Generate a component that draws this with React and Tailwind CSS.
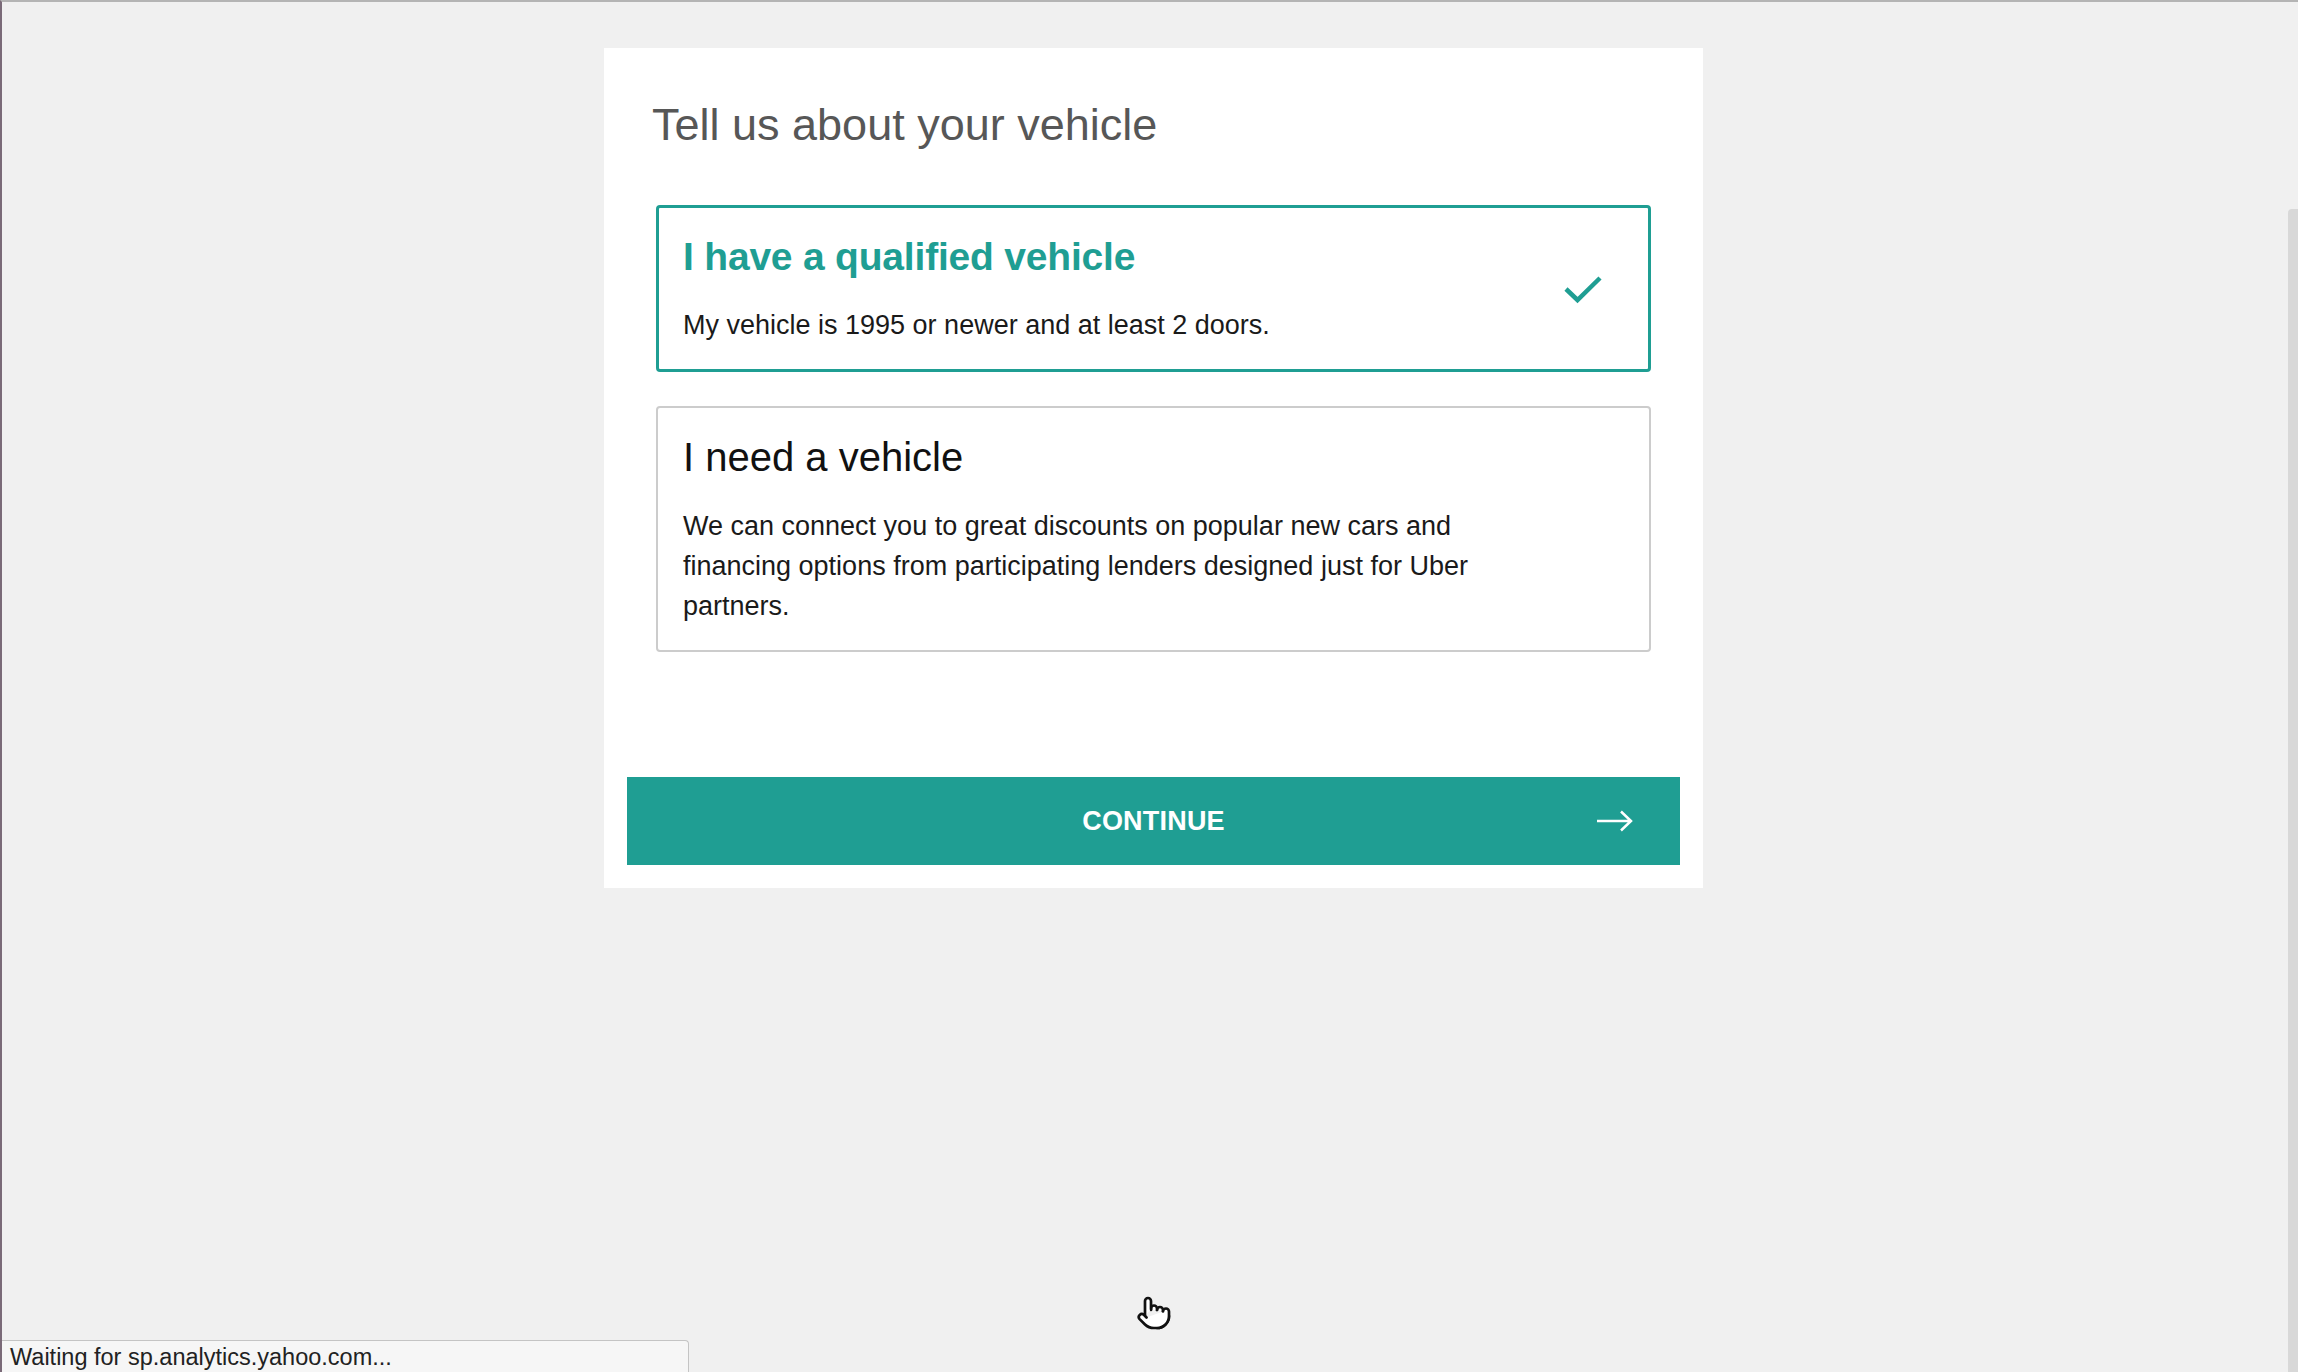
import { Pointer } from "lucide-react";

const font = { fontFamily: '"Liberation Sans", Arial, sans-serif' };

function CheckMark() {
  return (
    <svg width="38" height="28" viewBox="0 0 38 28" fill="none">
      <path d="M2 13 L13.5 24 L36 2" stroke="#1f9e93" strokeWidth="4.5" strokeLinejoin="miter" />
    </svg>
  );
}

function ArrowRight() {
  return (
    <svg width="36" height="22" viewBox="0 0 36 22" fill="none">
      <path d="M0 11 H34 M24 1.5 L34 11 L24 20.5" stroke="#ffffff" strokeWidth="2.5" />
    </svg>
  );
}

export default function App() {
  return (
    <div
      className="relative h-screen overflow-hidden bg-[#f0f0f0] border-t-2 border-t-[#b4b4b4] border-l-2 border-l-[#7a6a78]"
      style={font}
    >
      {/* form card */}
      <div className="ml-[602px] mt-[46px] w-[1099px] bg-white pt-[51px] pb-[23px]">
        <h1 className="pl-[48px] text-[45px] leading-[52px] font-normal text-[#575757]">
          Tell us about your vehicle
        </h1>

        <div className="mx-[52px] mt-[54px] flex flex-col gap-[34px]">
          {/* selected option */}
          <div className="flex items-center justify-between rounded-[4px] border-[3px] border-[#1f9e93] pl-[24px] pr-[46px] pt-[26px] pb-[24px]">
            <div>
              <div className="text-[39px] leading-[46px] font-bold text-[#1f9e93] tracking-[-0.2px]">
                I have a qualified vehicle
              </div>
              <p className="mt-[25px] text-[27px] leading-[40px] text-[#1a1a1a]">
                My vehicle is 1995 or newer and at least 2 doors.
              </p>
            </div>
            <CheckMark />
          </div>

          {/* second option */}
          <div className="rounded-[4px] border-2 border-[#cccccc] pl-[25px] pr-[25px] pt-[26px] pb-[24px]">
            <div className="text-[40px] leading-[46px] font-normal text-[#111111]">
              I need a vehicle
            </div>
            <p className="mt-[26px] max-w-[820px] text-[27px] leading-[40px] text-[#1a1a1a]">
              We can connect you to great discounts on popular new cars and financing options from participating lenders designed just for Uber partners.
            </p>
          </div>
        </div>

        <div className="px-[23px] mt-[125px]">
          <button className="relative flex h-[88px] w-full items-center justify-center bg-[#1f9e93] text-white">
            <span className="text-[27px] font-bold tracking-[0.2px]">CONTINUE</span>
            <span className="absolute right-[47px] top-1/2 -translate-y-1/2">
              <ArrowRight />
            </span>
          </button>
        </div>
      </div>

      {/* window scrollbar */}
      <div className="absolute right-0 top-[207px] bottom-0 w-[10px] rounded-tl-[4px] bg-[#d8d8d8]" />

      {/* mouse cursor */}
      <div className="absolute left-[1134px] top-[1293px]">
        <Pointer size={36} strokeWidth={1.8} color="#111111" fill="#ffffff" />
      </div>

      {/* browser status bar */}
      <div className="absolute bottom-0 left-0 flex h-[32px] w-[687px] items-center rounded-tr-[4px] border-t border-r border-[#c4c4c4] bg-[#f6f6f6] pl-[8px]">
        <span className="pt-[3px] text-[23.5px] leading-none text-[#222222]">Waiting for sp.analytics.yahoo.com...</span>
      </div>
    </div>
  );
}
